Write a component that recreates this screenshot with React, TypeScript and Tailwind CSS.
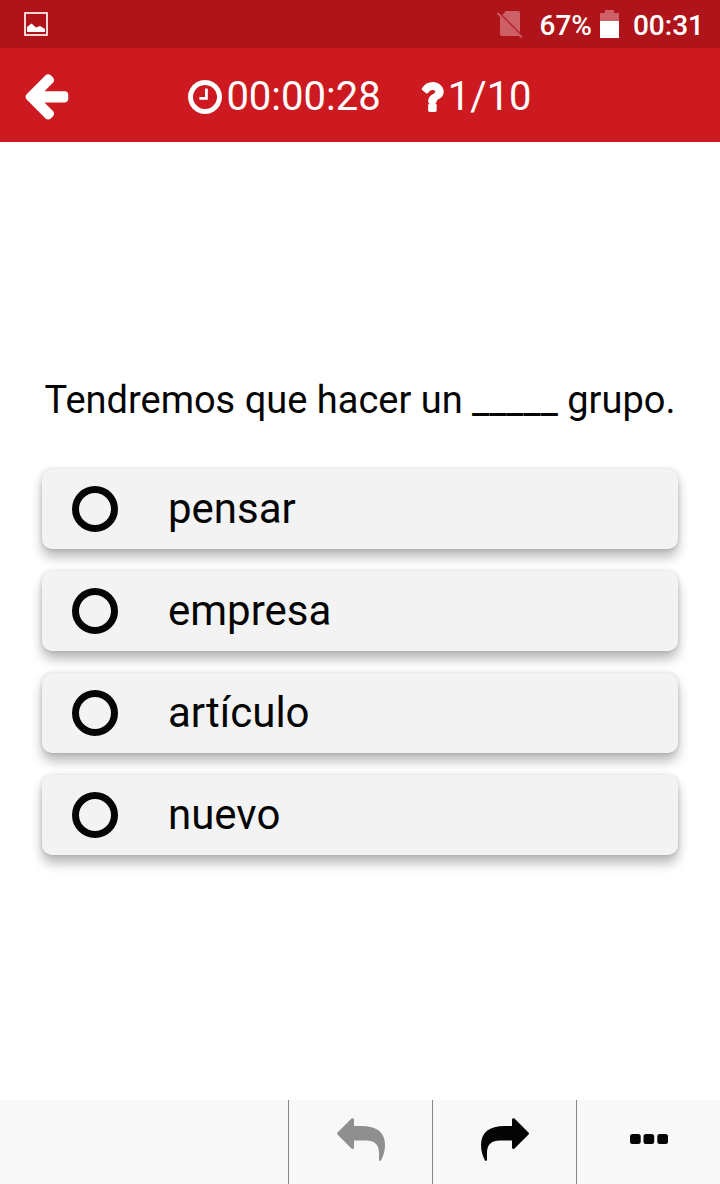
import React, { useState } from 'react';

const OPTIONS = ['pensar', 'empresa', 'artículo', 'nuevo'];

const PictureIcon = () => (
  <svg width="24" height="24" viewBox="0 0 24 24" aria-hidden="true">
    <rect x="1" y="1" width="22" height="22" fill="none" stroke="#fbeaea" strokeWidth="1.800" />
    <path d="M3 20V15L7.500 11.500L12 15.500L16 14L21 17V20Z" fill="white" />
  </svg>
);

const NoSimIcon = () => (
  <svg width="28" height="30" viewBox="0 0 28 30" aria-hidden="true">
    <path d="M10 2H22Q24 2 24 4V25Q24 27 22 27H6Q4 27 4 25V8Z" fill="#cd6067" />
    <path d="M3 4L26 27" stroke="#af141b" strokeWidth="2" />
    <path d="M1.500 4L26 28.500" stroke="#c95860" strokeWidth="2.200" />
  </svg>
);

const BatteryIcon = () => (
  <svg width="19" height="30" viewBox="0 0 19 30" aria-hidden="true">
    <path d="M5 1H14V4H19V13H0V4H5Z" fill="#cd6067" />
    <path d="M0 12H19V29H0Z" fill="white" />
  </svg>
);

const ArrowLeftIcon = () => (
  <svg width="52" height="52" viewBox="0 0 1792 1792" fill="currentColor" aria-hidden="true">
    <path d="M1664 896v128q0 53-32.500 90.500t-84.500 37.500h-704l293 294q38 36 38 90t-38 90l-75 76q-37 37-90 37-52 0-91-37l-651-652q-37-37-37-90 0-52 37-91l651-650q38-38 91-38 52 0 90 38l75 74q38 38 38 91t-38 91l-293 293h704q52 0 84.500 37.500t32.500 90.500z" />
  </svg>
);

const ClockIcon = () => (
  <svg width="34" height="34" viewBox="128 128 1536 1536" fill="currentColor" aria-hidden="true">
    <path d="M1024 544v448q0 14-9 23t-23 9h-320q-14 0-23-9t-9-23v-64q0-14 9-23t23-9h224v-352q0-14 9-23t23-9h64q14 0 23 9t9 23zm416 352q0-148-73-273t-198-198-273-73-273 73-198 198-73 273 73 273 198 198 273 73 273-73 198-198 73-273zm224 0q0 209-103 385.500t-279.500 279.500-385.500 103-385.500-103-279.500-279.500-103-385.500 103-385.500 279.500-279.500 385.500-103 385.500 103 279.500 279.500 103 385.500z" />
  </svg>
);

const QuestionIcon = () => (
  <svg width="23" height="40" viewBox="416 0 1030 1792" fill="currentColor" stroke="currentColor" strokeWidth="60" aria-hidden="true">
    <path d="M1088 1256v240q0 16-12 28t-28 12h-240q-16 0-28-12t-12-28v-240q0-16 12-28t28-12h240q16 0 28 12t12 28zm316-600q0 54-15.500 101t-35 76.500-55 59.500-57.500 43.500-61 35.500q-41 23-68.500 65t-27.500 67q0 17-12 32.500t-28 15.500h-240q-15 0-25.500-18.500t-10.500-37.500v-45q0-83 65-156.500t143-108.500q59-27 84-56t25-76q0-42-46.500-74t-107.500-32q-65 0-108 29-35 25-107 115-13 16-31 16-12 0-25-8l-164-125q-13-10-15.500-25t5.500-28q160-266 464-266 80 0 161 31t146 83 106 127.500 41 158.500z" />
  </svg>
);

const ReplyIcon = ({ className = '' }: { className?: string }) => (
  <svg width="48" height="43" viewBox="0 0 48 43" fill="currentColor" className={className} aria-hidden="true">
    <path d="M.5 14.500L14.500.6Q17-.8 17 2V8H24C40 8 48 14.500 48 27C48 33 46.500 37 44.300 42Q43 44 42 42V35C42 26 37 22.500 29 22.500H17V29Q17 32 14.500 30.400L.5 16.500Q-.5 15.500.5 14.500Z" />
  </svg>
);

const DotsIcon = () => (
  <svg width="38" height="10" viewBox="0 0 38 10" fill="currentColor" aria-hidden="true">
    <rect x="0" width="10.700" height="10" rx="2.500" />
    <rect x="13.500" width="10.700" height="10" rx="2.500" />
    <rect x="27.300" width="10.700" height="10" rx="2.500" />
  </svg>
);

export default function App() {
  const [selected, setSelected] = useState<string | null>(null);

  return (
    <div className="min-h-screen flex flex-col bg-white text-[#050505] font-[Roboto,sans-serif]">
      <div className="h-12 px-6 flex items-center justify-between bg-[#af141b] text-white">
        <PictureIcon />
        <div className="flex items-center gap-2 -mr-2 text-[28px] leading-8 font-medium">
          <NoSimIcon />
          <span className="pt-[3px] pl-2">67%</span>
          <BatteryIcon />
          <span className="pt-[3px] pl-[6px]">00:31</span>
        </div>
      </div>

      <header className="h-[94px] grid grid-cols-[96px_1fr_96px] items-center bg-[#cd1a20] text-white">
        <button type="button" aria-label="Back" className="pl-5">
          <ArrowLeftIcon />
        </button>
        <div className="flex items-center justify-center gap-10 pt-1 text-[40px] leading-12">
          <span className="flex items-center gap-1">
            <ClockIcon />
            <span>00:00:28</span>
          </span>
          <span className="flex items-center gap-1">
            <QuestionIcon />
            <span>1/10</span>
          </span>
        </div>
      </header>

      <main className="flex-1 flex flex-col justify-center px-[42px]">
        <h1 id="question" className="mb-[41px] text-center text-[38px] leading-14">
          Tendremos que hacer un _____ grupo.
        </h1>
        <div role="radiogroup" aria-labelledby="question" className="flex flex-col gap-[22px] pb-[15px]">
          {OPTIONS.map((option) => (
            <label
              key={option}
              className="h-20 px-[30px] flex items-center gap-[50px] rounded-[10px] bg-[#f3f3f3] text-[42px] leading-12 shadow-[0_8px_12px_rgba(0,0,0,0.28),0_0_4px_rgba(0,0,0,0.15)]"
            >
              <input
                type="radio"
                name="answer"
                value={option}
                checked={selected === option}
                onChange={() => setSelected(option)}
                className="appearance-none size-[46px] shrink-0 rounded-full border-[7px] border-[#050505] checked:bg-[radial-gradient(#050505_40%,transparent_45%)]"
              />
              <span>{option}</span>
            </label>
          ))}
        </div>
      </main>

      <footer className="h-[84px] grid grid-cols-5 bg-[#f8f8f8]">
        <button type="button" aria-label="Previous" disabled className="col-start-3 pb-[6px] flex items-center justify-center border-l border-[#888] text-[#8f8f8f]">
          <ReplyIcon />
        </button>
        <button type="button" aria-label="Next" className="pb-[6px] flex items-center justify-center border-l border-[#888]">
          <ReplyIcon className="-scale-x-100" />
        </button>
        <button type="button" aria-label="More" className="pb-[6px] flex items-center justify-center border-l border-[#888]">
          <DotsIcon />
        </button>
      </footer>
    </div>
  );
}
